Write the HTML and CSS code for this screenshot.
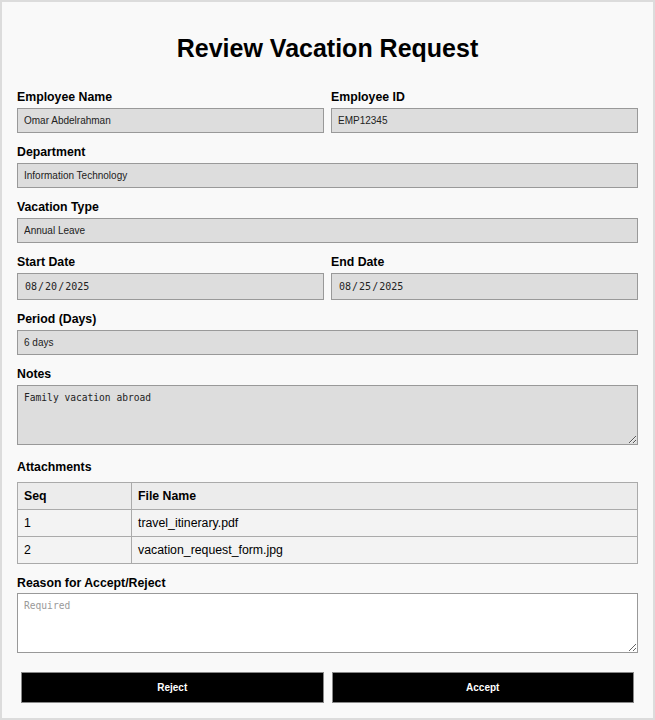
FILE: index.html
```html
<!DOCTYPE html>
<html lang="en">
<head>
<meta charset="utf-8">
<title>Review Vacation Request</title>
<link rel="stylesheet" href="styles.css">
</head>
<body>
<div class="page">
  <h1 class="title">Review Vacation Request</h1>

  <div class="row">
    <div class="field">
      <label class="label">Employee Name</label>
      <input class="input" type="text" value="Omar Abdelrahman" readonly>
    </div>
    <div class="field">
      <label class="label">Employee ID</label>
      <input class="input" type="text" value="EMP12345" readonly>
    </div>
  </div>

  <div class="field">
    <label class="label">Department</label>
    <input class="input" type="text" value="Information Technology" readonly>
  </div>

  <div class="field">
    <label class="label">Vacation Type</label>
    <input class="input" type="text" value="Annual Leave" readonly>
  </div>

  <div class="row">
    <div class="field">
      <label class="label">Start Date</label>
      <input class="input date" type="date" value="2025-08-20" readonly>
    </div>
    <div class="field">
      <label class="label">End Date</label>
      <input class="input date" type="date" value="2025-08-25" readonly>
    </div>
  </div>

  <div class="field">
    <label class="label">Period (Days)</label>
    <input class="input" type="text" value="6 days" readonly>
  </div>

  <div class="field field-notes">
    <label class="label">Notes</label>
    <textarea class="area area-readonly" readonly>Family vacation abroad</textarea>
  </div>

  <div class="field">
    <label class="label label-table">Attachments</label>
    <table class="table">
      <colgroup><col class="col-seq"><col></colgroup>
      <thead>
        <tr><th>Seq</th><th>File Name</th></tr>
      </thead>
      <tbody>
        <tr><td>1</td><td>travel_itinerary.pdf</td></tr>
        <tr><td>2</td><td>vacation_request_form.jpg</td></tr>
      </tbody>
    </table>
  </div>

  <div class="field field-reason">
    <label class="label label-reason">Reason for Accept/Reject</label>
    <textarea class="area" placeholder="Required"></textarea>
  </div>

  <div class="actions">
    <button class="btn" type="button">Reject</button>
    <button class="btn" type="button">Accept</button>
  </div>
</div>
</body>
</html>
```
FILE: styles.css
```css
html, body {
  margin: 0;
  padding: 0;
  background: #f9f9f9;
}

body {
  font-family: "Liberation Sans", Arial, sans-serif;
  color: #000;
}

.page {
  box-sizing: border-box;
  width: 655px;
  min-height: 720px;
  border: 2px solid #dcdcdc;
  padding: 0 15px 15px;
  background: #f9f9f9;
}

.title {
  font-size: 25px;
  line-height: 28px;
  font-weight: bold;
  text-align: center;
  margin: 32px 0 28px;
}

.row {
  display: grid;
  grid-template-columns: 1fr 1fr;
  column-gap: 7px;
}

.field {
  margin-bottom: 12px;
}

.label {
  display: block;
  font-size: 12.3px;
  line-height: 15px;
  font-weight: bold;
  margin-bottom: 3px;
}

.input {
  display: block;
  box-sizing: border-box;
  width: 100%;
  height: 25px;
  margin: 0;
  padding: 0 6px;
  border: 1px solid #999;
  border-radius: 0;
  background: #ddd;
  color: #222;
  font-family: "Liberation Sans", Arial, sans-serif;
  font-size: 10px;
  outline: none;
}

.date {
  height: 27px;
  font-family: "DejaVu Sans Mono", monospace;
}

.date::-webkit-calendar-picker-indicator {
  display: none;
}

.field-notes {
  margin-bottom: 15px;
}

.area {
  display: block;
  box-sizing: border-box;
  width: 100%;
  height: 60px;
  margin: 0;
  padding: 6px;
  border: 1px solid #999;
  border-radius: 0;
  background: #fff;
  color: #222;
  font-family: "DejaVu Sans Mono", monospace;
  font-size: 9.6px;
  outline: none;
}

.area::placeholder {
  color: #999;
}

.area-readonly {
  background: #ddd;
}

.label-table {
  margin-bottom: 7px;
}

.label-reason {
  margin-bottom: 2px;
}

.table {
  width: 100%;
  border-collapse: collapse;
  font-size: 12.3px;
}

.col-seq {
  width: 114px;
}

.table th,
.table td {
  height: 26px;
  padding: 0 6px;
  border: 1px solid #aaa;
  text-align: left;
}

.table th {
  background: #ececec;
  font-weight: bold;
}

.table td {
  background: #f3f3f3;
}

.field-reason {
  margin-bottom: 19px;
}

.actions {
  display: flex;
  gap: 8px;
  padding: 0 4px;
}

.btn {
  flex: 1;
  height: 31px;
  margin: 0;
  border: 1px solid #888;
  border-radius: 0;
  background: #000;
  color: #fff;
  font-family: "Liberation Sans", Arial, sans-serif;
  font-size: 10px;
  font-weight: bold;
}
```
